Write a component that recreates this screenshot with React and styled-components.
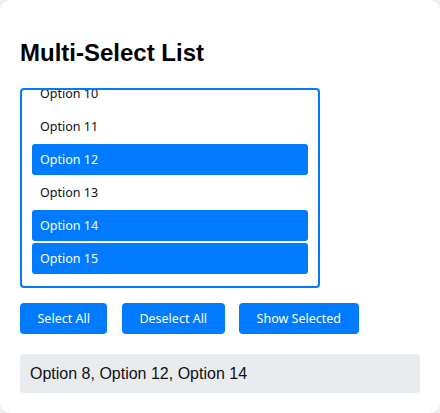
import React, { useEffect, useRef } from 'react';
import styled, { createGlobalStyle } from 'styled-components';

const GlobalStyle = createGlobalStyle`
  html, body {
    margin: 0;
    padding: 0;
    background: #f4f4f4;
  }
  body {
    font-family: "Liberation Sans", Arial, sans-serif;
  }
`;

const Card = styled.div`
  box-sizing: border-box;
  width: 440px;
  min-height: 413px;
  background: #fff;
  border-radius: 10px;
  box-shadow: 0 0 10px rgba(0, 0, 0, 0.08);
  padding: 20px;
`;

const Title = styled.h2`
  margin: 19px 0 21px;
  font-size: 24px;
  font-weight: bold;
  color: #000;
`;

const ListBox = styled.div`
  box-sizing: border-box;
  width: 300px;
  height: 200px;
  border: 2px solid #007bff;
  border-radius: 4px;
  padding: 10px;
  overflow-y: auto;
  scrollbar-width: none;
  &::-webkit-scrollbar { display: none; }
`;

const Option = styled.div`
  box-sizing: border-box;
  height: 31px;
  margin-bottom: 2px;
  padding: 0 8px;
  display: flex;
  align-items: center;
  border-radius: 3px;
  font-family: "Noto Sans", sans-serif;
  font-size: 12.5px;
  color: ${p => (p.selected ? '#fff' : '#111')};
  background: ${p => (p.selected ? '#007bff' : 'transparent')};
`;

const Buttons = styled.div`
  display: flex;
  gap: 14.5px;
  margin-top: 15px;
`;

const Button = styled.button`
  height: 31px;
  padding: 0 17.5px;
  border: none;
  border-radius: 4px;
  background: #007bff;
  color: #fff;
  font-family: "Noto Sans", sans-serif;
  font-size: 12.5px;
  cursor: pointer;
`;

const Output = styled.div`
  margin-top: 20px;
  height: 39px;
  box-sizing: border-box;
  padding: 0 10px;
  display: flex;
  align-items: center;
  background: #e9ecef;
  border-radius: 4px;
  font-size: 16px;
  color: #111;
`;

const options = Array.from({ length: 15 }, (_, i) => `Option ${i + 1}`);
const selected = ['Option 8', 'Option 12', 'Option 14', 'Option 15'];

export default function App() {
  const listRef = useRef(null);

  useEffect(() => {
    // the list sits scrolled to its end, as in the screenshot
    const el = listRef.current;
    if (el) el.scrollTop = el.scrollHeight;
  }, []);

  return (
    <>
      <GlobalStyle />
      <Card>
        <Title>Multi-Select List</Title>
        <ListBox ref={listRef}>
          {options.map(o => (
            <Option key={o} selected={selected.includes(o)}>{o}</Option>
          ))}
        </ListBox>
        <Buttons>
          <Button>Select All</Button>
          <Button>Deselect All</Button>
          <Button>Show Selected</Button>
        </Buttons>
        <Output>Option 8, Option 12, Option 14</Output>
      </Card>
    </>
  );
}
